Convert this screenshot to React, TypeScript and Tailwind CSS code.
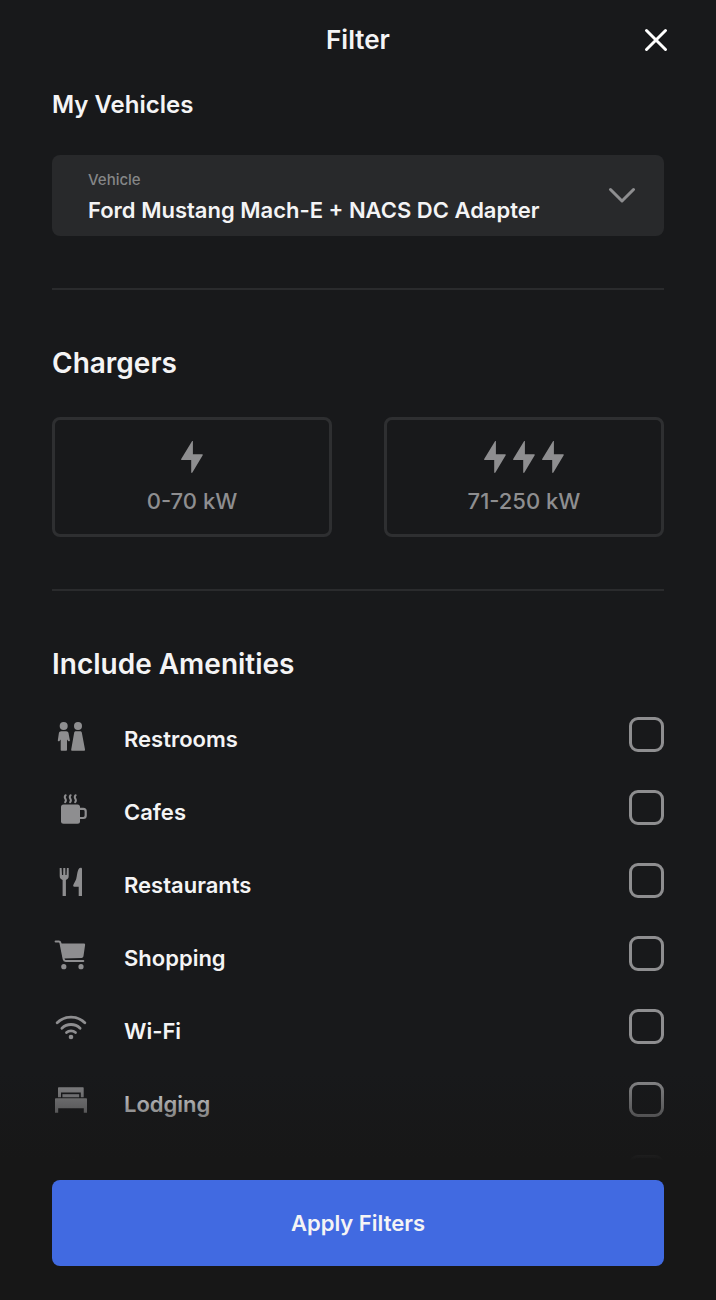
import { useState } from "react";
import type { FormEvent, ReactNode } from "react";

const VEHICLES = ["Ford Mustang Mach-E + NACS DC Adapter"];

const CHARGERS = [
  { id: "slow", label: "0-70 kW", bolts: 1 },
  { id: "fast", label: "71-250 kW", bolts: 3 },
];

const AMENITIES: { id: string; label?: string; icon: ReactNode }[] = [
  {
    id: "restrooms",
    label: "Restrooms",
    icon: (
      <>
        <circle cx="11.7" cy="5" r="4" />
        <path d="M9.2 10.2h5c1.3 0 2 .7 2.3 1.9l1.400 7.400c.1.800-1.200 1.200-1.700.5l-1.200-1.500V29c0 .5-.3.8-.8.8H9.500c-.5 0-.8-.3-.8-.8V18.500l-1.200 1.500c-.5.7-1.800.3-1.700-.5l1.100-7.400c.3-1.200 1-1.900 2.300-1.900z" />
        <circle cx="26" cy="5" r="4" />
        <path d="M24 10.2h4c1 0 1.5.5 1.8 1.4L33 28.4c.1.8-.3 1.3-1 1.3H20.2c-.7 0-1.1-.5-1-1.3l3-16.800c.3-.9.8-1.4 1.800-1.400z" />
      </>
    ),
  },
  {
    id: "cafes",
    label: "Cafes",
    icon: (
      <>
        <rect x="9" y="10.5" width="19" height="19.2" rx="2.5" />
        <path
          d="M27 14.8h4.3c1.5 0 2.4.9 2.4 2.4v4.4c0 1.5-.9 2.4-2.4 2.4H27"
          fill="none"
          stroke="currentColor"
          strokeWidth="2.2"
        />
        <path
          d="M13.6 1.2c-3 3.2 2.2 3.6-.4 7M18.6 1.2c-3 3.2 2.2 3.6-.4 7M23.6 1.2c-3 3.2 2.2 3.6-.4 7"
          fill="none"
          stroke="currentColor"
          strokeWidth="2"
          strokeLinecap="round"
        />
      </>
    ),
  },
  {
    id: "restaurants",
    label: "Restaurants",
    icon: (
      <>
        <path d="M7.7 1h1.9l.4 7h1.2l.1-7h2l.1 7h1.2l.3-7h1.8v8c0 2.1-1 3.3-2.8 4v16h-3.3V13c-1.9-.7-2.9-1.9-2.9-4z" />
        <path d="M28.7.8c.8 0 1.3.4 1.3 1.2v27h-3.3v-9.3h-4.4c-1 0-1.3-.7-1-1.6.8-2.2 2.2-3.8 2.9-6.1.8-2.8.8-6.2 2.1-9.2.5-1.2 1.3-2 2.4-2z" />
      </>
    ),
  },
  {
    id: "shopping",
    label: "Shopping",
    icon: (
      <>
        <path
          d="M3.6 1.6h3.2c.9 0 1.4.4 1.6 1.3l3.3 16.3c.2 1.2.8 1.8 2 1.8h17.6"
          fill="none"
          stroke="currentColor"
          strokeWidth="2"
          strokeLinecap="round"
        />
        <path d="M8.2 3.4h23.5c1.1 0 1.6.6 1.4 1.6l-1.6 11c-.2 1.2-.8 1.8-1.9 1.9l-18.4.6z" />
        <circle cx="11.8" cy="26.7" r="2.6" />
        <circle cx="29" cy="26.7" r="2.6" />
      </>
    ),
  },
  {
    id: "wifi",
    label: "Wi-Fi",
    icon: (
      <>
        <g
          fill="none"
          stroke="currentColor"
          strokeWidth="2.8"
          strokeLinecap="round"
        >
          <path d="M5.2 9.8a19.8 19.8 0 0 1 27.6 0" />
          <path d="M9.9 15.2a13 13 0 0 1 18.2 0" />
          <path d="M14.5 19.6a6.6 6.6 0 0 1 9 0" />
        </g>
        <circle cx="19" cy="24" r="2.3" />
      </>
    ),
  },
  {
    id: "lodging",
    label: "Lodging",
    icon: (
      <>
        <path d="M6 2.3c0-.7.4-1 1-1h23.7c.7 0 1 .3 1 1v9h-2.9V6.6H9v4.7H6z" />
        <path d="M10.4 8.2h16.8v3.1H10.4z" />
        <path d="M3 13.3c0-.7.4-1 1-1h30c.6 0 1 .3 1 1v13.4h-3.2v-4.4H6.2v4.4H3z" />
      </>
    ),
  },
  {
    id: "parks",
    icon: (
      <>
        <circle cx="21" cy="9" r="9" />
        <path d="M19.5 16h3v14h-3z" />
      </>
    ),
  },
];

function Bolt() {
  return (
    <svg className="h-8 w-[22px]" viewBox="0 0 22 32" fill="currentColor">
      <path d="M11 .2c.4-.5.9-.3.9.3v12.8h9.2c.7 0 .9.4.6 1L11.4 31.6c-.4.6-1.2.4-1.2-.3V19H.7c-.6 0-.9-.4-.5-1z" />
    </svg>
  );
}

export default function App() {
  const [vehicle, setVehicle] = useState(VEHICLES[0]);
  const [chargers, setChargers] = useState<string[]>([]);
  const [amenities, setAmenities] = useState<string[]>([]);

  const toggle = (list: string[], id: string) =>
    list.includes(id) ? list.filter((v) => v !== id) : [...list, id];

  const handleSubmit = (e: FormEvent) => {
    e.preventDefault();
  };

  return (
    <form
      onSubmit={handleSubmit}
      className="flex h-screen flex-col bg-[#18191b] font-['Inter',sans-serif] font-semibold text-[#f4f4f5]"
    >
      <header className="grid h-20 shrink-0 grid-cols-[1fr_auto_1fr] items-center px-9">
        <h1 className="col-start-2 text-[26px] leading-8">Filter</h1>
        <button
          type="button"
          aria-label="Close"
          className="flex size-12 items-center justify-center justify-self-end"
        >
          <svg
            className="size-6"
            viewBox="0 0 24 24"
            fill="none"
            stroke="white"
            strokeWidth="3"
            strokeLinecap="round"
          >
            <path d="M2.5 2.5l19 19M21.5 2.5l-19 19" />
          </svg>
        </button>
      </header>

      <div className="relative min-h-0 flex-1">
        <main className="h-full overflow-y-auto px-[52px] [scrollbar-width:none]">
          <section className="border-b-2 border-[#2a2b2d] pt-[9px] pb-[52px]">
            <h2 className="text-2xl leading-8">My Vehicles</h2>
            <div className="relative mt-[34px] rounded-lg bg-[#28292b]">
              <label
                htmlFor="vehicle"
                className="block px-9 pt-[15px] text-[15px] leading-5 font-medium text-[#858687]"
              >
                Vehicle
              </label>
              <select
                id="vehicle"
                value={vehicle}
                onChange={(e) => setVehicle(e.target.value)}
                className="block w-full appearance-none bg-transparent pt-[2px] pr-16 pb-2 pl-9 text-[22px] leading-9"
              >
                {VEHICLES.map((name) => (
                  <option key={name}>{name}</option>
                ))}
              </select>
              <svg
                className="pointer-events-none absolute top-8 right-7 h-4 w-7"
                viewBox="0 0 28 16"
                fill="none"
                stroke="#8e8e90"
                strokeWidth="3"
                strokeLinecap="round"
                strokeLinejoin="round"
              >
                <path d="M2.5 2.5L14 14 25.5 2.5" />
              </svg>
            </div>
          </section>

          <section className="border-b-2 border-[#2a2b2d] pt-[55px] pb-[52px]">
            <h2 className="text-[28px] leading-9">Chargers</h2>
            <div className="mt-9 grid grid-cols-2 gap-[52px]">
              {CHARGERS.map(({ id, label, bolts }) => (
                <button
                  key={id}
                  type="button"
                  aria-pressed={chargers.includes(id)}
                  onClick={() => setChargers(toggle(chargers, id))}
                  className="flex h-[120px] flex-col items-center gap-3 rounded-lg border-3 border-[#2e2f31] pt-[21px] font-medium text-[#8e8e90] aria-pressed:border-[#3f6ae0]"
                >
                  <span className="flex gap-[7px]">
                    {Array.from({ length: bolts }, (_, i) => (
                      <Bolt key={i} />
                    ))}
                  </span>
                  <span className="text-[22px] leading-8">{label}</span>
                </button>
              ))}
            </div>
          </section>

          <section className="pt-[55px]">
            <h2 className="text-[28px] leading-9">Include Amenities</h2>
            <ul className="mt-4">
              {AMENITIES.map(({ id, label, icon }) => (
                <li key={id} className="flex h-[73px] items-center">
                  <label
                    htmlFor={id}
                    className="flex flex-1 items-center gap-9 pt-1"
                  >
                    <svg
                      className="h-8 w-9 text-[#8e8e90]"
                      viewBox="0 0 36 32"
                      fill="currentColor"
                    >
                      {icon}
                    </svg>
                    {label && (
                      <span className="pt-1 text-[22px] leading-8">
                        {label}
                      </span>
                    )}
                  </label>
                  <input
                    id={id}
                    type="checkbox"
                    aria-label={label ?? id}
                    checked={amenities.includes(id)}
                    onChange={() => setAmenities(toggle(amenities, id))}
                    className="size-[35px] appearance-none rounded-[9px] border-3 border-[#8e8e90] checked:border-[#3f6ae0] checked:bg-[#3f6ae0]"
                  />
                </li>
              ))}
            </ul>
          </section>
        </main>
        {/* fades the list out above the button */}
        <div className="pointer-events-none absolute inset-x-0 bottom-0 h-[88px] bg-linear-to-t from-[#171717] to-[#171717]/0" />
      </div>

      <footer className="shrink-0 bg-[#171717] px-[52px] pt-5 pb-[34px]">
        <button
          type="submit"
          className="h-[86px] w-full rounded-lg bg-[#416ae1] text-[22px] leading-8"
        >
          Apply Filters
        </button>
      </footer>
    </form>
  );
}
